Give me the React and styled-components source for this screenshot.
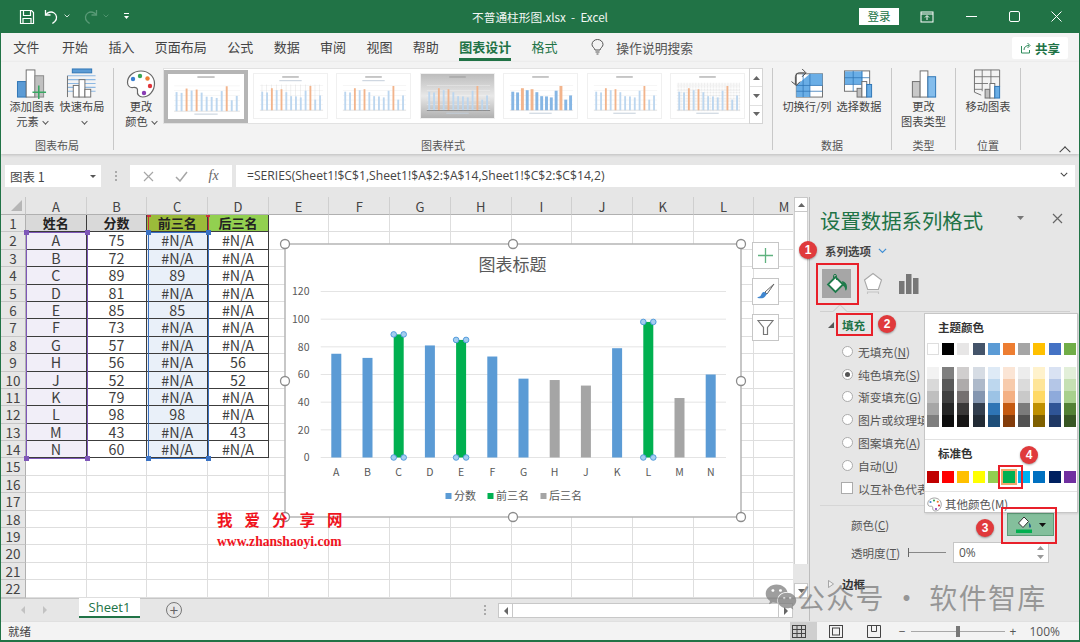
import React from 'react';
import styled, { createGlobalStyle, css } from 'styled-components';
import { FaWeixin } from 'react-icons/fa';

const UI_FONT = '"Open Sans", "Noto Sans CJK SC", sans-serif';
const CJK_FONT = '"Noto Sans CJK SC", "Noto Sans", sans-serif';
const GREEN = '#217346';

const GlobalStyle = createGlobalStyle`
  html, body { margin: 0; padding: 0; background: #fff; }
  body { font-family: ${CJK_FONT}; overflow: hidden; }
  * { box-sizing: border-box; }
`;

const Window = styled.div`
  position: relative;
  width: 1080px;
  height: 642px;
  display: flex;
  flex-direction: column;
  border: 0 solid ${GREEN};
  border-width: 0 1px 2px 1px;
  background: #e6e6e6;
  overflow: hidden;
`;

/* title bar */
const TitleBarRow = styled.div`
  height: 33px;
  flex: none;
  background: ${GREEN};
  color: #fff;
  display: grid;
  grid-template-columns: 1fr auto 1fr;
  align-items: center;
`;
const Quick = styled.div`
  display: flex;
  align-items: center;
  padding-left: 17px;
`;
const Gap = styled.span`
  width: ${p => p.$w}px;
  flex: none;
`;
const Mirror = styled.span`
  display: flex;
  transform: scaleX(-1);
`;
const TitleText = styled.div`
  font-size: 11.7px;
  color: #f2f7f4;
  white-space: pre;
`;
const TitleRight = styled.div`
  display: flex;
  align-items: center;
  justify-content: flex-end;
`;
const Login = styled.div`
  width: 40px;
  height: 17px;
  background: #fff;
  color: ${GREEN};
  font-size: 11.5px;
  line-height: 17px;
  text-align: center;
  margin-right: 7px;
`;
const WinBtn = styled.div`
  width: 42px;
  display: flex;
  justify-content: center;
  align-items: center;
  margin-right: ${p => p.$mr || 0}px;
`;

/* tabs */
const TabRow = styled.div`
  height: 29px;
  flex: none;
  background: #f3f3f3;
  display: flex;
  align-items: flex-start;
  padding-left: 2px;
`;
const Tab = styled.div`
  height: 28px;
  padding: 4px 10.2px 0;
  margin-right: ${p => p.$mr || 0}px;
  font-size: 13px;
  line-height: 20px;
  color: ${p => (p.$green ? GREEN : '#444')};
  font-weight: ${p => (p.$active ? 700 : 400)};
  position: relative;
  ${p => p.$active && css`
    &::after {
      content: '';
      position: absolute;
      left: 10px;
      right: 10px;
      bottom: 0;
      height: 3px;
      background: ${GREEN};
    }
  `}
`;
const SearchHint = styled.div`
  display: flex;
  align-items: center;
  gap: 12px;
  margin-left: 23.5px;
  padding-top: 4px;
  height: 24px;
  font-size: 12.8px;
  color: #555;
`;
const ShareBtn = styled.div`
  margin-left: auto;
  margin-right: 11px;
  margin-top: 4px;
  width: 56px;
  height: 22px;
  background: #fff;
  border-radius: 2px;
  display: flex;
  align-items: center;
  justify-content: center;
  gap: 3px;
  font-size: 12.5px;
  font-weight: 700;
  color: ${GREEN};
`;

/* ribbon */
const Ribbon = styled.div`
  height: 92px;
  flex: none;
  background: #f3f3f3;
  display: flex;
  position: relative;
  box-shadow: 0 1px 3px rgba(0, 0, 0, 0.18);
  z-index: 2;
`;
const Group = styled.div`
  width: ${p => p.$w}px;
  flex: none;
  display: flex;
  flex-direction: column;
  margin: 6px 0 4px;
  border-right: 1px solid #c8c8c8;
`;
const GroupBody = styled.div`
  flex: 1;
  min-height: 0;
  display: flex;
  justify-content: ${p => p.$justify || 'center'};
`;
const GroupLabel = styled.div`
  height: 18px;
  margin-bottom: -4px;
  font-size: 11px;
  line-height: 18px;
  text-align: center;
  color: #555;
`;
const LargeBtn = styled.div`
  width: ${p => p.$w}px;
  flex: none;
  padding-left: ${p => p.$pl || 0}px;
  display: flex;
  flex-direction: column;
  align-items: center;
  font-size: 11.2px;
  line-height: 15px;
  color: #444;
  text-align: center;
  white-space: nowrap;
`;
const BtnIcon = styled.div`
  height: 31px;
  flex: none;
  display: flex;
  align-items: center;
  justify-content: center;
`;
const Caret = styled.span`
  display: inline-block;
  width: 5px;
  height: 5px;
  margin-left: 4px;
  border-right: 1px solid #555;
  border-bottom: 1px solid #555;
  transform: translateY(-2px) rotate(45deg) scale(0.9);
`;
const Gallery = styled.div`
  width: 600px;
  height: 56px;
  display: flex;
  background: #fff;
  box-shadow: inset 0 0 0 1px #e2e2e2;
`;
const ThumbList = styled.div`
  flex: 1;
  display: flex;
  align-items: center;
  gap: 8.5px;
  padding-left: 1px;
`;
const Thumb = styled.div`
  width: ${p => (p.$sel ? 84 : 75)}px;
  height: ${p => (p.$sel ? 53 : 46)}px;
  flex: none;
  margin-right: ${p => (p.$sel ? -4 : 0)}px;
  border: ${p => (p.$sel ? '4px solid #b5b5b5' : '1px solid #f0f0f0')};
  background: #fff;
  display: flex;
`;
const GalleryArrows = styled.div`
  width: 14px;
  flex: none;
  display: flex;
  flex-direction: column;
  border: 1px solid #d4d4d4;
  background: #fff;
`;
const GalleryArrow = styled.div`
  flex: 1;
  display: flex;
  align-items: center;
  justify-content: center;
  border-bottom: 1px solid #e0e0e0;
  &:last-child { border-bottom: 0; }
`;
const Collapse = styled.div`
  position: absolute;
  right: 10px;
  bottom: 1px;
  width: 8px;
  height: 8px;
  border-left: 1px solid #444;
  border-top: 1px solid #444;
  transform: rotate(45deg) translate(2px, 2px);
`;

/* formula bar */
const FormulaRow = styled.div`
  height: 43px;
  flex: none;
  padding: 11px 4px 10px 4px;
  display: flex;
  align-items: stretch;
  gap: 4px;
  background: #e6e6e6;
`;
const NameBox = styled.div`
  width: 96px;
  background: #fff;
  display: flex;
  align-items: center;
  justify-content: space-between;
  padding: 0 5px;
  font-size: 12.5px;
  color: #444;
`;
const DownTri = styled.span`
  width: 0;
  height: 0;
  border-left: 3px solid transparent;
  border-right: 3px solid transparent;
  border-top: 3px solid #555;
`;
const Dots = styled.div`
  width: 21px;
  display: flex;
  flex-direction: column;
  justify-content: center;
  align-items: center;
  gap: 2px;
  span { width: 2px; height: 2px; background: #aaa; }
`;
const FxBox = styled.div`
  width: 102px;
  background: #fff;
  display: flex;
  align-items: center;
  justify-content: space-around;
  padding: 0 3px;
`;
const FxMark = styled.span`
  font-family: "Liberation Serif", serif;
  font-style: italic;
  font-size: 14px;
  color: #666;
`;
const FormulaInput = styled.div`
  flex: 1;
  background: #fff;
  display: flex;
  align-items: center;
  justify-content: space-between;
  padding: 0 7px 2px 11px;
  font-family: ${UI_FONT};
  font-size: 12.15px;
  color: #444;
`;

/* sheet */
const Main = styled.div`
  flex: 1;
  min-height: 0;
  display: flex;
`;
const SheetArea = styled.div`
  width: 808px;
  flex: none;
  position: relative;
  display: flex;
  flex-direction: column;
`;
const SheetBody = styled.div`
  flex: 1;
  min-height: 0;
  display: flex;
`;
const Grid = styled.div`
  width: 792px;
  flex: none;
  display: grid;
  grid-template-columns: 25px repeat(13, 60.7px);
  grid-template-rows: 18px repeat(22, 17.4px);
  overflow: hidden;
  background: #fff;
`;
const Corner = styled.div`
  background: #e6e6e6;
  border-right: 1px solid #c6c6c6;
  border-bottom: 1px solid #b0b0b0;
  position: relative;
  &::after {
    content: '';
    position: absolute;
    right: 3px;
    bottom: 3px;
    border-left: 11px solid transparent;
    border-bottom: 11px solid #b6b6b6;
  }
`;
const ColHead = styled.div`
  background: #e6e6e6;
  border-right: 1px solid #cfcfcf;
  border-bottom: 1px solid #b0b0b0;
  padding-top: 2px;
  font-size: 13px;
  line-height: 15px;
  text-align: center;
  color: #444;
`;
const RowHead = styled.div`
  background: #e6e6e6;
  border-right: 1px solid #b0b0b0;
  border-bottom: 1px solid #c6c6c6;
  font-size: 13.5px;
  line-height: 17px;
  text-align: center;
  color: #444;
`;
const Empty = styled.div`
  background: #fff;
  border-right: 1px solid #dedede;
  border-bottom: 1px solid #dedede;
`;
const Cell = styled.div`
  border-right: 1px solid #3c3c3c;
  border-bottom: 1px solid #3c3c3c;
  background: ${p => p.$bg || '#fff'};
  font-size: ${p => (p.$head ? 13 : 14.3)}px;
  font-weight: ${p => (p.$head ? 700 : 400)};
  color: ${p => (p.$head ? '#222' : '#3f3f3f')};
  line-height: 16.4px;
  text-align: center;
  white-space: nowrap;
`;
const RangeBox = styled.div`
  position: absolute;
  left: ${p => p.$x}px;
  top: ${p => p.$y}px;
  width: ${p => p.$w}px;
  height: ${p => p.$h}px;
  border: 1.5px solid ${p => p.$color};
  pointer-events: none;
`;
const RangeDot = styled.i`
  position: absolute;
  width: 5px;
  height: 5px;
  background: ${p => p.$color};
  ${p => (p.$left ? 'left: -3px;' : 'right: -3px;')}
  ${p => (p.$top ? 'top: -3px;' : 'bottom: -3px;')}
`;
const NameRange = styled.div`
  position: absolute;
  left: 146.5px;
  top: 18px;
  width: 61.5px;
  height: 18px;
  border-left: 1.5px solid #c8343c;
  border-right: 1.5px solid #c8343c;
  pointer-events: none;
  &::before, &::after {
    content: '';
    position: absolute;
    top: 0;
    width: 4px;
    height: 2px;
    background: #c8343c;
  }
  &::before { left: -2px; }
  &::after { right: -2px; }
`;
const ChartBox = styled.div`
  position: absolute;
  left: 277px;
  top: 40px;
  width: 474px;
  height: 287px;
`;
const ChartTools = styled.div`
  position: absolute;
  left: 751px;
  top: 45px;
  display: flex;
  flex-direction: column;
  gap: 9px;
`;
const ChartTool = styled.div`
  width: 27px;
  height: 27px;
  background: #fff;
  border: 1px solid #c6c6c6;
  display: flex;
  align-items: center;
  justify-content: center;
`;

/* sheet scrollbars */
const VScroll = styled.div`
  width: 14px;
  margin-left: 1px;
  flex: none;
  display: flex;
  flex-direction: column;
`;
const ScrollArrow = styled.div`
  height: 15px;
  flex: none;
  background: #fff;
  border: 1px solid #c8c8c8;
  display: flex;
  align-items: center;
  justify-content: center;
`;
const VTrack = styled.div`
  flex: 1;
  background: #fff;
  border-left: 1px solid #d0d0d0;
  border-right: 1px solid #d0d0d0;
`;
const VGutter = styled.div`
  height: 19px;
  flex: none;
`;
const SheetTabs = styled.div`
  height: 23px;
  flex: none;
  display: flex;
  align-items: flex-start;
  background: #e6e6e6;
  border-top: 1px solid #c6c6c6;
`;
const NavTri = styled.span`
  width: 0;
  height: 0;
  border-top: 4px solid transparent;
  border-bottom: 4px solid transparent;
  ${p => (p.$right
    ? `border-left: 4px solid ${p.$color || '#c2c2c2'};`
    : `border-right: 4px solid ${p.$color || '#c2c2c2'};`)}
`;
const SheetNav = styled.div`
  width: 78px;
  height: 21px;
  flex: none;
  padding-left: 20px;
  display: flex;
  align-items: center;
  gap: 18px;
`;
const SheetTab = styled.div`
  width: 61px;
  height: 20px;
  background: #fff;
  border-bottom: 2px solid ${GREEN};
  margin-top: -1px;
  font-family: ${UI_FONT};
  font-size: 13px;
  line-height: 18px;
  color: ${GREEN};
  text-align: center;
`;
const AddSheet = styled.div`
  margin: 3px 0 0 26px;
  width: 16px;
  height: 16px;
  border: 1px solid #777;
  border-radius: 50%;
  color: #666;
  font-size: 15px;
  line-height: 13px;
  text-align: center;
`;
const HScroll = styled.div`
  margin: 4px 16px 0 auto;
  width: 295px;
  height: 15px;
  display: flex;
  background: #fff;
  border: 1px solid #c8c8c8;
  justify-content: space-between;
`;
const HArrow = styled.div`
  width: 14px;
  display: flex;
  align-items: center;
  justify-content: center;
  border-right: 1px solid #c8c8c8;
  &:last-child { border-right: 0; border-left: 1px solid #c8c8c8; }
`;
const TabDots = styled(Dots)`
  width: auto;
  margin: 3px 0 0 0;
  height: 15px;
  position: absolute;
  left: 483px;
`;

/* format panel */
const Panel = styled.div`
  flex: 1;
  position: relative;
  background: #e6e6e6;
  border-left: 1px solid #bdbdbd;
  padding: 0 0 0 10px;
  display: flex;
  flex-direction: column;
`;
const PanelHead = styled.div`
  height: 45px;
  flex: none;
  display: flex;
  align-items: center;
  font-size: 20.4px;
  color: ${GREEN};
`;
const PanelHeadTools = styled.div`
  margin-left: auto;
  display: flex;
  align-items: center;
  gap: 28px;
  padding: 0 16px 3px 0;
`;
const SeriesRow = styled.div`
  height: 18px;
  padding-left: 5px;
  display: flex;
  align-items: center;
  gap: 7px;
  font-size: 11.5px;
  font-weight: 700;
  color: #444;
`;
const IconRow = styled.div`
  display: flex;
  align-items: center;
  height: 29px;
  margin: 9px 0 0 2px;
  gap: 7px;
`;
const PanelIcon = styled.div`
  width: 29px;
  height: 29px;
  display: flex;
  align-items: center;
  justify-content: center;
  background: ${p => (p.$on ? '#a6a6a6' : 'transparent')};
`;
const Notch = styled.div`
  height: 1px;
  background: #d0d0d0;
  margin: 13px 0 0 0;
  width: 250px;
  position: relative;
  &::before {
    content: '';
    position: absolute;
    left: 15px;
    top: -5px;
    width: 9px;
    height: 9px;
    background: #e6e6e6;
    border-left: 1px solid #cfcfcf;
    border-top: 1px solid #cfcfcf;
    transform: rotate(45deg);
  }
`;
const SectionHead = styled.div`
  height: 24px;
  margin-top: ${p => p.$mt || 0}px;
  display: flex;
  align-items: center;
  gap: 8px;
  padding-left: 8px;
  font-size: 11.5px;
  font-weight: 700;
  color: ${p => (p.$green ? GREEN : '#333')};
`;
const OpenTri = styled.span`
  width: 0;
  height: 0;
  border-left: 6px solid transparent;
  border-bottom: 6px solid #555;
`;
const ClosedTri = styled.span`
  width: 6px;
  height: 8px;
  flex: none;
  display: flex;
`;
const OptionList = styled.div`
  padding-left: 22px;
  margin-top: 3px;
`;
const Option = styled.div`
  height: 22.8px;
  display: flex;
  align-items: center;
  gap: 5px;
  font-size: 11.8px;
  color: #555;
  white-space: nowrap;
  u { text-underline-offset: 1px; }
`;
const Radio = styled.span`
  width: 11px;
  height: 11px;
  flex: none;
  border: 1px solid #ababab;
  border-radius: 50%;
  background: #fff;
  display: flex;
  align-items: center;
  justify-content: center;
  ${p => p.$on && css`
    &::after { content: ''; width: 5px; height: 5px; border-radius: 50%; background: #555; }
  `}
`;
const Check = styled.span`
  width: 12px;
  height: 12px;
  flex: none;
  margin-left: -1px;
  border: 1px solid #ababab;
  background: #fff;
`;
const Divider = styled.div`
  height: 1px;
  width: 240px;
  margin: 5px 0 0 0;
  background: #d6d6d6;
`;
const FieldRow = styled.div`
  display: flex;
  align-items: center;
  height: ${p => p.$h}px;
  margin-top: ${p => p.$mt || 0}px;
  padding-left: 31px;
  font-size: 11.5px;
  color: #555;
  u { text-underline-offset: 1px; }
`;
const FieldLabel = styled.span`
  width: 57px;
  flex: none;
  white-space: nowrap;
`;
const ColorBtn = styled.div`
  margin-left: 99px;
  width: 47px;
  height: 23px;
  background: #84bf9c;
  border: 1px solid #5e9c79;
  display: flex;
  align-items: center;
  justify-content: center;
  gap: 6px;
`;
const Slider = styled.div`
  width: 38px;
  height: 1px;
  background: #888;
  position: relative;
  &::before {
    content: '';
    position: absolute;
    left: 0;
    top: -4px;
    width: 1px;
    height: 9px;
    background: #666;
  }
`;
const Spin = styled.div`
  margin-left: 7px;
  width: 96px;
  height: 21px;
  background: #fff;
  border: 1px solid #c6c6c6;
  display: flex;
  align-items: center;
  justify-content: space-between;
  padding: 0 4px 0 5px;
  font-family: ${UI_FONT};
  font-size: 12px;
`;
const SpinArrows = styled.div`
  display: flex;
  flex-direction: column;
  gap: 5px;
  svg { display: block; }
`;

/* colour popup */
const Popup = styled.div`
  position: absolute;
  left: 114px;
  top: 116px;
  width: 154px;
  height: 200px;
  background: #fff;
  border: 1px solid #c6c6c6;
  display: flex;
  flex-direction: column;
  box-shadow: 1px 1px 2px rgba(0, 0, 0, 0.1);
`;
const PopTitle = styled.div`
  padding: 5px 0 0 13px;
  height: ${p => p.$h}px;
  flex: none;
  font-size: 11.5px;
  font-weight: 700;
  color: #333;
`;
const SwatchRow = styled.div`
  display: grid;
  grid-template-columns: repeat(10, 12px);
  column-gap: 3.2px;
  padding-left: 2px;
  margin-top: ${p => p.$mt || 0}px;
`;
const Swatch = styled.span`
  height: 12px;
  background: ${p => p.$c};
  box-shadow: ${p => (p.$light ? 'inset 0 0 0 1px #dedede' : 'none')};
  outline: ${p => (p.$picked ? '2px solid #f4a76b' : 'none')};
`;
const ShadeCol = styled.div`
  display: flex;
  flex-direction: column;
`;
const PopSep = styled.div`
  height: 1px;
  flex: none;
  background: #e2e2e2;
  margin-top: ${p => p.$mt}px;
`;
const MoreColors = styled.div`
  display: flex;
  align-items: center;
  gap: 3px;
  padding: 4px 0 0 2px;
  font-size: 11.5px;
  color: #555;
  white-space: nowrap;
`;

/* status bar */
const StatusBar = styled.div`
  height: 19px;
  flex: none;
  background: #f3f3f3;
  display: flex;
  align-items: center;
  padding-left: 7px;
  font-size: 11.5px;
  color: #444;
  border-top: 1px solid #e0e0e0;
`;
const ViewBtn = styled.div`
  width: ${p => p.$w}px;
  height: 18px;
  flex: none;
  padding-right: ${p => p.$pr || 0}px;
  display: flex;
  align-items: center;
  justify-content: center;
  background: ${p => (p.$on ? '#cfcfcf' : 'transparent')};
`;
const ZoomBar = styled.div`
  display: flex;
  align-items: center;
  margin-left: auto;
  margin-right: 19px;
  font-family: ${UI_FONT};
  font-size: 12px;
  color: #555;
`;
const ZoomMinus = styled.span`
  margin-left: 6px;
`;
const ZoomLine = styled.div`
  width: 94px;
  height: 1px;
  margin: 0 5px;
  background: #a8a8a8;
  position: relative;
  &::after {
    content: '';
    position: absolute;
    left: 45px;
    top: -5px;
    width: 4px;
    height: 11px;
    background: #777;
  }
`;
const ZoomText = styled.span`
  margin-left: 13px;
`;

/* things lying over the shot */
const RedBox = styled.div`
  position: absolute;
  left: ${p => p.$x}px;
  top: ${p => p.$y}px;
  width: ${p => p.$w}px;
  height: ${p => p.$h}px;
  border: 2px solid #e8202a;
  pointer-events: none;
  z-index: 6;
`;
const Marker = styled.div`
  position: absolute;
  left: ${p => p.$x - 9}px;
  top: ${p => p.$y - 9}px;
  width: 18px;
  height: 18px;
  border-radius: 50%;
  background: #e03a3c;
  color: #fff;
  font-family: "Liberation Sans", sans-serif;
  font-size: 12px;
  font-weight: 700;
  line-height: 18px;
  text-align: center;
  box-shadow: 0 1px 2px rgba(0, 0, 0, 0.35);
  z-index: 6;
`;
const Mark = styled.div`
  position: absolute;
  left: 216px;
  top: 509px;
  width: 128px;
  color: #f0141e;
  font-family: "Liberation Serif", "Noto Sans CJK SC", serif;
  font-weight: 700;
  z-index: 5;
`;
const MarkTitle = styled.div`
  font-family: ${CJK_FONT};
  font-size: 15.5px;
  line-height: 20px;
  letter-spacing: 12px;
  white-space: nowrap;
`;
const MarkUrl = styled.div`
  font-size: 13.6px;
  line-height: 16px;
  margin-top: 5px;
  white-space: nowrap;
`;
const PublicMark = styled.div`
  position: absolute;
  left: 764px;
  top: 579px;
  display: flex;
  align-items: center;
  gap: 0;
  font-size: 28px;
  line-height: 36px;
  letter-spacing: 1.3px;
  color: rgba(120, 120, 120, 0.72);
  white-space: nowrap;
  z-index: 5;
`;

const Save = () => (
  <svg width="18" height="18" viewBox="0 0 18 18" fill="none" stroke="#fff" strokeWidth="1.2">
    <path d="M2.5 2.5h11l2 2v11h-13z" />
    <path d="M5.5 2.5v5h7v-5M5 15.5v-5h8v5" />
  </svg>
);
const Undo = ({ color = '#fff' }) => (
  <svg width="17" height="17" viewBox="0 0 17 17" fill="none" stroke={color} strokeWidth="1.3">
    <path d="M2.5 2v5h5" />
    <path d="M2.8 6.8C4.500 4.300 8 3.200 10.800 4.700c3.300 1.800 3.600 6.300 1 8.800L9.400 15.600" />
  </svg>
);
const Chevron = ({ color = '#fff', w = 6 }) => (
  <svg width={w} height={w * 0.67} viewBox="0 0 6 4" fill="none" stroke={color} strokeWidth="0.8">
    <path d="M.6.6 3 3l2.4-2.4" />
  </svg>
);

const BarIcon = () => (
  <svg width="32" height="31" viewBox="0 0 32 32">
    <rect x="1" y="14" width="9" height="16" fill="#5b9bd5" stroke="#2e75b5" />
    <rect x="10" y="2" width="9" height="28" fill="#fff" stroke="#6f6f6f" />
    <rect x="19" y="8" width="9" height="22" fill="#c0c0c0" stroke="#8a8a8a" />
    <path d="M23 18v14M16.500 25h14" stroke="#37a762" strokeWidth="1.6" />
  </svg>
);
const LayoutIcon = () => (
  <svg width="32" height="31" viewBox="0 0 32 32">
    <rect x="6" y="1" width="20" height="4" fill="#5b9bd5" stroke="#2e75b5" />
    <path d="M1 8h29M1 12h29M1 16h29M1 20h29M1 24h29" stroke="#8db8e2" strokeWidth="1.2" />
    <path d="M1 8v22" stroke="#6f6f6f" />
    <rect x="7" y="18" width="6" height="12" fill="#fff" stroke="#6f6f6f" />
    <rect x="13" y="12" width="6" height="18" fill="#fff" stroke="#6f6f6f" />
    <rect x="19" y="22" width="6" height="8" fill="#fff" stroke="#6f6f6f" />
  </svg>
);
const Palette = ({ size = 30 }) => (
  <svg width={size} height={size} viewBox="0 0 30 30">
    <path d="M15 2C7 2 1.500 7.500 1.500 13.500c0 3.800 3 5.500 5.500 5 3-.6 5 .9 4.500 3.500-.6 3.200 1.500 6 5 6 7 0 12-6.500 12-13.500S22.500 2 15 2z" fill="#fff" stroke="#666" strokeWidth="1.2" />
    <circle cx="7" cy="10" r="2.200" fill="#3b7fd0" />
    <circle cx="14" cy="7" r="2.200" fill="#3aa655" />
    <circle cx="21.500" cy="9.500" r="2.200" fill="#ed7d31" />
    <circle cx="24" cy="17" r="2.200" fill="#e0343a" />
    <circle cx="18" cy="24" r="2.200" fill="#8a3db5" />
  </svg>
);
const SwitchIcon = () => (
  <svg width="34" height="31" viewBox="0 0 34 32">
    <rect x="6" y="6" width="27" height="24" fill="#fff" stroke="#6f6f6f" />
    <path d="M6 30V18l14-12h13v12H20v12z" fill="#6aaee6" />
    <path d="M20 6v24M6 18h27M6 24h27M13 6v24" stroke="#2e75b5" strokeWidth="0.8" />
    <path d="M1 14l5 4 4-4M5 17V9c0-2 2-4 4-4h6M12 1l4 4-4 4" fill="none" stroke="#444" strokeWidth="1" />
  </svg>
);
const DataIcon = () => (
  <svg width="32" height="31" viewBox="0 0 32 32">
    <rect x="1" y="3" width="26" height="21" fill="#fff" stroke="#6f6f6f" />
    <rect x="1.500" y="3.500" width="18" height="13" fill="#6aaee6" />
    <path d="M10 3v21M19 3v21M1 10h26M1 17h26" stroke="#2e75b5" strokeWidth="0.8" />
    <rect x="14" y="21" width="5" height="9" fill="#bfbfbf" stroke="#6f6f6f" />
    <rect x="19" y="14" width="5" height="16" fill="#fff" stroke="#6f6f6f" />
    <rect x="24" y="17" width="5" height="13" fill="#6aaee6" stroke="#2e75b5" />
  </svg>
);
const TypeIcon = () => (
  <svg width="28" height="31" viewBox="0 0 28 32">
    <rect x="2" y="14" width="8" height="16" fill="#c8c8c8" stroke="#6f6f6f" />
    <rect x="10" y="3" width="8" height="27" fill="#fff" stroke="#6f6f6f" />
    <rect x="18" y="9" width="8" height="21" fill="#84bdec" stroke="#2e75b5" />
  </svg>
);
const MoveIcon = () => (
  <svg width="32" height="31" viewBox="0 0 32 32" fill="none">
    <path d="M2 2h26v17M2 2v23l7 3" stroke="#6f6f6f" />
    <path d="M2 9h26M2 16h14M2 22h8M10 2v22M19 2v14" stroke="#6f6f6f" strokeWidth="0.9" />
    <rect x="13" y="22" width="5" height="9" fill="#bfbfbf" stroke="#6f6f6f" />
    <rect x="18" y="16" width="5" height="15" fill="#fff" stroke="#6f6f6f" />
    <rect x="23" y="19" width="5" height="12" fill="#6aaee6" stroke="#2e75b5" />
  </svg>
);
const PaintBucket = () => (
  <svg width="24" height="24" viewBox="0 0 24 24">
    <path d="M10.500 5 3 12.500 10.500 20l7.500-7.500z" fill="#fff" stroke="#1f7a4b" strokeWidth="1.8" />
    <path d="M8.500 8V3.500c0-1.400 3-1.400 3 0V8" fill="none" stroke="#1f7a4b" strokeWidth="1" />
    <path d="M17 9c3 .8 5 2.800 5 6 0 2-.6 3.500-1.200 3.500-.7 0-.6-1.800-1-2.800-.5-1.200-1.300-1.700-2-2.200z" fill="#1f7a4b" />
  </svg>
);
const Pentagon = () => (
  <svg width="20" height="24" viewBox="0 0 20 24" fill="#fff" stroke="#a8a8a8" strokeWidth="1.1">
    <path d="m10 1.500 8.500 6.500-3.200 9.500H4.700L1.500 8z" />
    <path d="M4.500 22v-2h11v2" fill="none" stroke="#c4c4c4" />
  </svg>
);
const BarsGlyph = () => (
  <svg width="22" height="22" viewBox="0 0 22 22" fill="#777">
    <rect x="1" y="8" width="5.500" height="13" />
    <rect x="8" y="1" width="5.500" height="20" />
    <rect x="15" y="5" width="5.500" height="16" />
  </svg>
);
const TinyBucket = () => (
  <svg width="18" height="18" viewBox="0 0 18 18">
    <path d="M9 1 3.500 7l4.500 4.500L13.500 5.500z" fill="#fff" stroke="#333" />
    <path d="M14 7c1.500 1 2 2.500 2 3.500S15 12 14.500 11.500 14 8 14 7z" fill="#1f5f8a" />
    <rect x="1" y="13.500" width="16" height="3.500" fill="#00b050" />
  </svg>
);
const TriUp = ({ color = '#666' }) => (
  <svg width="7" height="4" viewBox="0 0 7 4"><path d="M3.500 0 7 4H0z" fill={color} /></svg>
);
const TriDown = ({ color = '#666' }) => (
  <svg width="7" height="4" viewBox="0 0 7 4"><path d="M0 0h7L3.500 4z" fill={color} /></svg>
);

const SCORES = [75, 72, 89, 81, 85, 73, 57, 56, 52, 79, 98, 43, 60];
const NAMES = ['A', 'B', 'C', 'D', 'E', 'F', 'G', 'H', 'J', 'K', 'L', 'M', 'N'];
const LETTERS = ['A', 'B', 'C', 'D', 'E', 'F', 'G', 'H', 'I', 'J', 'K', 'L', 'M'];
const TOP = [2, 4, 10];
const LOW = [7, 8, 11];

// small preview of one chart style in the gallery
const MiniChart = ({ kind }) => {
  const dark = kind === 'dark';
  const bold = kind === 'bold';
  const pattern = kind === 'pattern';
  const drop = kind === 'drop';
  const top = kind === 'top' || drop;
  const legendY = top ? 6.5 : 40.5;
  return (
    <svg width="100%" height="100%" viewBox="0 0 75 46" preserveAspectRatio="none">
      <defs>
        <linearGradient id="darkbg" x1="0" y1="0" x2="0" y2="1">
          <stop offset="0" stopColor="#bdbdbd" />
          <stop offset="0.5" stopColor="#e8e8e8" />
          <stop offset="1" stopColor="#b0b0b0" />
        </linearGradient>
        <pattern id="dots" width="3" height="3" patternUnits="userSpaceOnUse">
          <circle cx="1.5" cy="1.5" r="1" fill="#e6e6e6" />
        </pattern>
      </defs>
      <rect width="75" height="46" fill={dark ? 'url(#darkbg)' : '#fff'} />
      <rect x="29" y="2.500" width="17" height="1.200" fill="#a0a0a0" />
      <rect x="26" y={legendY} width="23" height="1" fill="#c2cdd9" />
      {pattern && <rect x="6" y="9" width="65" height="30" fill="url(#dots)" />}
      {[12, 17, 22, 27, 32, 37].map(y => (
        <rect key={y} x="6" y={y} width="65" height="0.4" fill={dark ? '#f4f4f4' : '#e8e8e8'} />
      ))}
      {SCORES.map((s, i) => {
        const h = s * 0.26;
        const x = 7.5 + i * 4.95;
        const tall = TOP.includes(i);
        const fill = tall ? '#f2b48c' : bold ? '#86b6e4' : '#bcd6ef';
        return (
          <g key={i}>
            {drop && <rect x={x + 0.5} y="11" width="0.4" height="27" fill="#d8d8d8" />}
            <rect x={x} y={38 - h} width={bold ? 3 : 1.9} height={h} fill={fill} />
          </g>
        );
      })}
      <rect x="6" y="38" width="65" height="0.5" fill={dark ? '#555' : '#d6d6d6'} />
    </svg>
  );
};

const Chart = () => {
  const base = 457.5;
  const scale = 166 / 120;
  const x0 = 320.7;
  const step = 31.2;
  const handles = [[285, 244], [513, 244], [741, 244], [285, 381], [741, 381], [285, 517], [513, 517], [741, 517]];
  return (
    <svg width="474" height="287" viewBox="278 237 474 287" fontFamily={CJK_FONT}>
      <rect x="285" y="244" width="456" height="273" fill="#fff" stroke="#b5b5b5" strokeWidth="1.500" />
      <text x="512.500" y="271" textAnchor="middle" fontSize="17" fill="#595959">图表标题</text>
      {[0, 20, 40, 60, 80, 100, 120].map(v => (
        <g key={v}>
          <line x1={x0} x2="726" y1={base - v * scale} y2={base - v * scale} stroke="#e4e4e4" />
          <text x="309.500" y={base - v * scale + 3.800} textAnchor="end" fontSize="10.500" fill="#595959">{v}</text>
        </g>
      ))}
      {SCORES.map((s, i) => {
        const cx = x0 + step * (i + 0.5);
        const picked = TOP.includes(i);
        const color = picked ? '#00b050' : LOW.includes(i) ? '#a5a5a5' : '#5b9bd5';
        const top = base - s * scale;
        return (
          <g key={i}>
            <rect x={cx - 5} y={top} width="10" height={s * scale} fill={color} />
            <text x={cx} y="476" textAnchor="middle" fontSize="10.500" fill="#595959">{NAMES[i]}</text>
            {picked && [[cx - 5, top], [cx + 5, top], [cx - 5, base], [cx + 5, base]].map(([hx, hy]) => (
              <circle key={`${hx}-${hy}`} cx={hx} cy={hy} r="2.800" fill="#a4cdf0" stroke="#4a95d8" strokeWidth="0.9" />
            ))}
          </g>
        );
      })}
      <rect x="445.500" y="493" width="6" height="6" fill="#5b9bd5" />
      <text x="454" y="500" fontSize="11" fill="#595959">分数</text>
      <rect x="487.500" y="493" width="6" height="6" fill="#00b050" />
      <text x="496" y="500" fontSize="11" fill="#595959">前三名</text>
      <rect x="540.500" y="493" width="6" height="6" fill="#a5a5a5" />
      <text x="549" y="500" fontSize="11" fill="#595959">后三名</text>
      {handles.map(([hx, hy]) => (
        <circle key={`${hx}-${hy}`} cx={hx} cy={hy} r="4.500" fill="#fff" stroke="#8c8c8c" strokeWidth="1.300" />
      ))}
    </svg>
  );
};

const THEME = [
  ['#ffffff', '#f2f2f2', '#d9d9d9', '#bfbfbf', '#a6a6a6', '#7f7f7f'],
  ['#000000', '#7f7f7f', '#595959', '#404040', '#262626', '#0d0d0d'],
  ['#e7e6e6', '#d0cece', '#aeabab', '#757070', '#3a3838', '#171616'],
  ['#44546a', '#d6dce4', '#adb9ca', '#8496b0', '#333f4f', '#222b35'],
  ['#5b9bd5', '#deeaf6', '#bdd7ee', '#9cc3e5', '#2e75b5', '#1e4e79'],
  ['#ed7d31', '#fbe5d5', '#f7cbac', '#f4b083', '#c55a11', '#833c0b'],
  ['#a5a5a5', '#ededed', '#dbdbdb', '#c9c9c9', '#7b7b7b', '#525252'],
  ['#ffc000', '#fff2cc', '#fee599', '#ffd965', '#bf9000', '#7f6000'],
  ['#4472c4', '#d9e2f3', '#b4c6e7', '#8eaadb', '#2f5496', '#1f3864'],
  ['#70ad47', '#e2efd9', '#c5e0b3', '#a8d08d', '#538135', '#375623'],
];
const STANDARD = ['#c00000', '#ff0000', '#ffc000', '#ffff00', '#92d050', '#00b050', '#00b0f0', '#0070c0', '#002060', '#7030a0'];

const ColorPopup = () => (
  <Popup>
    <PopTitle $h={29}>主题颜色</PopTitle>
    <SwatchRow>
      {THEME.map(col => <Swatch key={col[0]} $c={col[0]} $light={col[0] === '#ffffff'} />)}
    </SwatchRow>
    <SwatchRow $mt={12}>
      {THEME.map(col => (
        <ShadeCol key={col[0]}>
          {col.slice(1).map(c => <Swatch key={c} $c={c} />)}
        </ShadeCol>
      ))}
    </SwatchRow>
    <PopSep $mt={12} />
    <PopTitle $h={31}>标准色</PopTitle>
    <SwatchRow>
      {STANDARD.map(c => <Swatch key={c} $c={c} $picked={c === '#00b050'} />)}
    </SwatchRow>
    <PopSep $mt={8} />
    <MoreColors><Palette size={15} /><span>其他颜色(M)...</span></MoreColors>
  </Popup>
);

const App = () => (
  <Window>
    <GlobalStyle />
    <TitleBarRow>
      <Quick>
        <Save />
        <Gap $w={7} />
        <Undo />
        <Gap $w={4} />
        <Chevron />
        <Gap $w={12} />
        <Mirror><Undo color="#5a9a77" /></Mirror>
        <Gap $w={4} />
        <Chevron color="#5a9a77" />
        <Gap $w={14} />
        <svg width="7" height="7" viewBox="0 0 7 7" fill="#fff"><rect x="1" y="0" width="5" height="1" /><path d="M1 3h5L3.500 6z" /></svg>
      </Quick>
      <TitleText>不普通柱形图.xlsx  -  Excel</TitleText>
      <TitleRight>
        <Login>登录</Login>
        <WinBtn $mr={3}>
          <svg width="14" height="12" viewBox="0 0 14 12" fill="none" stroke="#fff"><rect x="1" y="1" width="12" height="10" /><path d="M1 3h12M7 9V5M5 6.500 7 4.500l2 2" /></svg>
        </WinBtn>
        <WinBtn>
          <svg width="12" height="2" viewBox="0 0 12 2"><rect width="11" height="1" fill="#fff" /></svg>
        </WinBtn>
        <WinBtn>
          <svg width="11" height="11" viewBox="0 0 11 11" fill="none" stroke="#fff"><rect x=".5" y=".5" width="10" height="10" rx="1.500" /></svg>
        </WinBtn>
        <WinBtn $mr={2}>
          <svg width="11" height="11" viewBox="0 0 11 11" stroke="#fff"><path d="m.5.500 10 10M10.500.500l-10 10" /></svg>
        </WinBtn>
      </TitleRight>
    </TitleBarRow>

    <TabRow>
      <Tab $mr={2.5}>文件</Tab>
      <Tab>开始</Tab>
      <Tab>插入</Tab>
      <Tab>页面布局</Tab>
      <Tab>公式</Tab>
      <Tab>数据</Tab>
      <Tab>审阅</Tab>
      <Tab>视图</Tab>
      <Tab>帮助</Tab>
      <Tab $active $green>图表设计</Tab>
      <Tab $green>格式</Tab>
      <SearchHint>
        <svg width="13" height="16" viewBox="0 0 13 16" fill="none" stroke="#555"><path d="M4 11C3.500 8.500 1 8 1 5.500a5.500 5 0 0 1 11 0C12 8 9.500 8.500 9 11zM4.500 13h4M5.500 15h2" /></svg>
        <span>操作说明搜索</span>
      </SearchHint>
      <ShareBtn>
        <svg width="12" height="12" viewBox="0 0 12 12" fill="none" stroke="#2f8c5c"><path d="M1.500 4v7h8V8M4 8c0-3 2-4.500 5-4.500M7.500 1l2.500 2.500L7.500 6" /></svg>
        <span>共享</span>
      </ShareBtn>
    </TabRow>

    <Ribbon>
      <Group $w={113}>
        <GroupBody>
          <LargeBtn $w={50}><BtnIcon><BarIcon /></BtnIcon>添加图表<span>元素<Caret /></span></LargeBtn>
          <LargeBtn $w={50}><BtnIcon><LayoutIcon /></BtnIcon>快速布局<span><Caret /></span></LargeBtn>
        </GroupBody>
        <GroupLabel>图表布局</GroupLabel>
      </Group>
      <Group $w={659}>
        <GroupBody $justify="flex-start">
          <LargeBtn $w={49} $pl={5}><BtnIcon><Palette /></BtnIcon>更改<span>颜色<Caret /></span></LargeBtn>
          <Gallery>
            <ThumbList>
              <Thumb $sel><MiniChart kind="plain" /></Thumb>
              <Thumb><MiniChart kind="drop" /></Thumb>
              <Thumb><MiniChart kind="top" /></Thumb>
              <Thumb><MiniChart kind="dark" /></Thumb>
              <Thumb><MiniChart kind="bold" /></Thumb>
              <Thumb><MiniChart kind="plain" /></Thumb>
              <Thumb><MiniChart kind="pattern" /></Thumb>
            </ThumbList>
            <GalleryArrows>
              <GalleryArrow><TriUp /></GalleryArrow>
              <GalleryArrow><TriDown /></GalleryArrow>
              <GalleryArrow><TriDown /></GalleryArrow>
            </GalleryArrows>
          </Gallery>
        </GroupBody>
        <GroupLabel>图表样式</GroupLabel>
      </Group>
      <Group $w={119}>
        <GroupBody>
          <LargeBtn $w={54}><BtnIcon><SwitchIcon /></BtnIcon>切换行/列</LargeBtn>
          <LargeBtn $w={50}><BtnIcon><DataIcon /></BtnIcon>选择数据</LargeBtn>
        </GroupBody>
        <GroupLabel>数据</GroupLabel>
      </Group>
      <Group $w={64}>
        <GroupBody>
          <LargeBtn $w={60}><BtnIcon><TypeIcon /></BtnIcon>更改<span>图表类型</span></LargeBtn>
        </GroupBody>
        <GroupLabel>类型</GroupLabel>
      </Group>
      <Group $w={65}>
        <GroupBody>
          <LargeBtn $w={60}><BtnIcon><MoveIcon /></BtnIcon>移动图表</LargeBtn>
        </GroupBody>
        <GroupLabel>位置</GroupLabel>
      </Group>
      <Collapse />
    </Ribbon>

    <FormulaRow>
      <NameBox>图表 1<DownTri /></NameBox>
      <Dots><span /><span /><span /></Dots>
      <FxBox>
        <svg width="11" height="11" viewBox="0 0 11 11" stroke="#a6a6a6" strokeWidth="1.200"><path d="m1 1 9 9M10 1l-9 9" /></svg>
        <svg width="13" height="11" viewBox="0 0 13 11" fill="none" stroke="#a6a6a6" strokeWidth="1.500"><path d="m1 6 4 4 7-9" /></svg>
        <FxMark>fx</FxMark>
      </FxBox>
      <FormulaInput>
        <span>=SERIES(Sheet1!$C$1,Sheet1!$A$2:$A$14,Sheet1!$C$2:$C$14,2)</span>
        <Chevron color="#444" w={8} />
      </FormulaInput>
    </FormulaRow>

    <Main>
      <SheetArea>
        <SheetBody>
          <Grid>
            <Corner />
            {LETTERS.map(l => <ColHead key={l}>{l}</ColHead>)}
            {Array.from({ length: 22 }, (_, r) => (
              <React.Fragment key={r}>
                <RowHead>{r + 1}</RowHead>
                {LETTERS.map((l, c) => {
                  if (c > 3 || r > 13) return <Empty key={l} />;
                  if (r === 0) {
                    const heads = ['姓名', '分数', '前三名', '后三名'];
                    const fills = ['#d9d9d9', '#d9d9d9', '#9bbb3a', '#92d050'];
                    return <Cell key={l} $head $bg={fills[c]}>{heads[c]}</Cell>;
                  }
                  const i = r - 1;
                  const value = [
                    NAMES[i],
                    SCORES[i],
                    TOP.includes(i) ? SCORES[i] : '#N/A',
                    LOW.includes(i) ? SCORES[i] : '#N/A',
                  ][c];
                  const bg = c === 0 ? '#f1eef8' : c === 2 ? '#e9f0f9' : '#fff';
                  return <Cell key={l} $bg={bg}>{value}</Cell>;
                })}
              </React.Fragment>
            ))}
          </Grid>
          <VScroll>
            <ScrollArrow><TriUp /></ScrollArrow>
            <VTrack />
            <VGutter />
            <ScrollArrow><TriDown /></ScrollArrow>
          </VScroll>
        </SheetBody>

        <RangeBox $x={25} $y={35} $w={61.500} $h={227} $color="#7e57b8">
          <RangeDot $color="#7e57b8" $left $top /><RangeDot $color="#7e57b8" $top />
          <RangeDot $color="#7e57b8" $left /><RangeDot $color="#7e57b8" />
        </RangeBox>
        <NameRange />
        <RangeBox $x={146.500} $y={35} $w={61.500} $h={227} $color="#3a72c4">
          <RangeDot $color="#3a72c4" $left $top /><RangeDot $color="#3a72c4" $top />
          <RangeDot $color="#3a72c4" $left /><RangeDot $color="#3a72c4" />
        </RangeBox>

        <ChartBox><Chart /></ChartBox>
        <ChartTools>
          <ChartTool>
            <svg width="17" height="17" viewBox="0 0 17 17" stroke="#5fb27f" strokeWidth="1.300"><path d="M8.500 1v15M1 8.500h15" /></svg>
          </ChartTool>
          <ChartTool>
            <svg width="19" height="17" viewBox="0 0 19 17"><path d="M18 1 9 9l2 2z" fill="#fff" stroke="#666" /><path d="M8.500 9c-3 0-3 3-4 4-.8.800-2.500 1-3.500 1.500 3 1.500 7 1 8.500-1.500.6-1 1.500-2 1.500-2z" fill="#3f86cf" /></svg>
          </ChartTool>
          <ChartTool>
            <svg width="17" height="17" viewBox="0 0 17 17" fill="none" stroke="#777" strokeWidth="1.200"><path d="M1 1.500h15l-5.500 7v7h-4v-7z" /></svg>
          </ChartTool>
        </ChartTools>

        <SheetTabs>
          <SheetNav><NavTri /><NavTri $right /></SheetNav>
          <SheetTab>Sheet1</SheetTab>
          <AddSheet>+</AddSheet>
          <TabDots><span /><span /><span /></TabDots>
          <HScroll>
            <HArrow><NavTri $color="#666" /></HArrow>
            <HArrow><NavTri $right $color="#666" /></HArrow>
          </HScroll>
        </SheetTabs>
      </SheetArea>

      <Panel>
        <PanelHead>
          设置数据系列格式
          <PanelHeadTools>
            <TriDown color="#777" />
            <svg width="11" height="11" viewBox="0 0 11 11" stroke="#666" strokeWidth="1.200"><path d="m1 1 9 9M10 1l-9 9" /></svg>
          </PanelHeadTools>
        </PanelHead>
        <SeriesRow>系列选项<Chevron color="#3f8ed4" w={9} /></SeriesRow>
        <IconRow>
          <PanelIcon $on><PaintBucket /></PanelIcon>
          <PanelIcon><Pentagon /></PanelIcon>
          <PanelIcon><BarsGlyph /></PanelIcon>
        </IconRow>
        <Notch />
        <SectionHead $green $mt={1}><OpenTri /><span>填充</span></SectionHead>
        <OptionList>
          <Option><Radio /><span>无填充(<u>N</u>)</span></Option>
          <Option><Radio $on /><span>纯色填充(<u>S</u>)</span></Option>
          <Option><Radio /><span>渐变填充(<u>G</u>)</span></Option>
          <Option><Radio /><span>图片或纹理填充(<u>P</u>)</span></Option>
          <Option><Radio /><span>图案填充(<u>A</u>)</span></Option>
          <Option><Radio /><span>自动(<u>U</u>)</span></Option>
          <Option><Check /><span>以互补色代表负值(<u>I</u>)</span></Option>
        </OptionList>
        <Divider />
        <FieldRow $h={32} $mt={3}>
          <FieldLabel>颜色(<u>C</u>)</FieldLabel>
          <ColorBtn><TinyBucket /><TriDown color="#111" /></ColorBtn>
        </FieldRow>
        <FieldRow $h={24}>
          <FieldLabel>透明度(<u>T</u>)</FieldLabel>
          <Slider />
          <Spin>0%<SpinArrows><TriUp color="#999" /><TriDown color="#999" /></SpinArrows></Spin>
        </FieldRow>
        <SectionHead $mt={7}>
          <ClosedTri><svg width="6" height="8" viewBox="0 0 6 8"><path d="m.5.500 5 3.500-5 3.500z" fill="#f2f2f2" stroke="#888" strokeWidth="0.7" /></svg></ClosedTri>
          <span>边框</span>
        </SectionHead>
        <ColorPopup />
      </Panel>
    </Main>

    <StatusBar>
      就绪
      <ZoomBar>
        <ViewBtn $w={27} $pr={9} $on>
          <svg width="14" height="13" viewBox="0 0 14 13" fill="none" stroke="#444"><rect x=".5" y=".5" width="13" height="12" /><path d="M.5 4.500h13M.5 8.500h13M5 .5v12M9.500 .5v12" /></svg>
        </ViewBtn>
        <ViewBtn $w={38}>
          <svg width="14" height="13" viewBox="0 0 14 13" fill="none" stroke="#444"><rect x=".5" y=".5" width="13" height="12" /><rect x="3.500" y="3" width="7" height="7" /></svg>
        </ViewBtn>
        <ViewBtn $w={38}>
          <svg width="14" height="13" viewBox="0 0 14 13" fill="none" stroke="#444"><path d="M.5 12.500V.5h13v12zM4.500 .5v6h5v-6" /></svg>
        </ViewBtn>
        <ZoomMinus>−</ZoomMinus>
        <ZoomLine />
        <span>+</span>
        <ZoomText>100%</ZoomText>
      </ZoomBar>
    </StatusBar>

    <RedBox $x={815} $y={263} $w={43} $h={42} />
    <Marker $x={807} $y={250}>1</Marker>
    <RedBox $x={835} $y={313} $w={37} $h={23} />
    <Marker $x={886} $y={324}>2</Marker>
    <RedBox $x={1000} $y={507} $w={56} $h={37} />
    <Marker $x={984} $y={528}>3</Marker>
    <RedBox $x={997} $y={465} $w={25} $h={24} />
    <Marker $x={1028} $y={455}>4</Marker>

    <Mark>
      <MarkTitle>我爱分享网</MarkTitle>
      <MarkUrl>www.zhanshaoyi.com</MarkUrl>
    </Mark>
    <PublicMark><FaWeixin size={32} /><span>公众号 · 软件智库</span></PublicMark>
  </Window>
);

export default App;
